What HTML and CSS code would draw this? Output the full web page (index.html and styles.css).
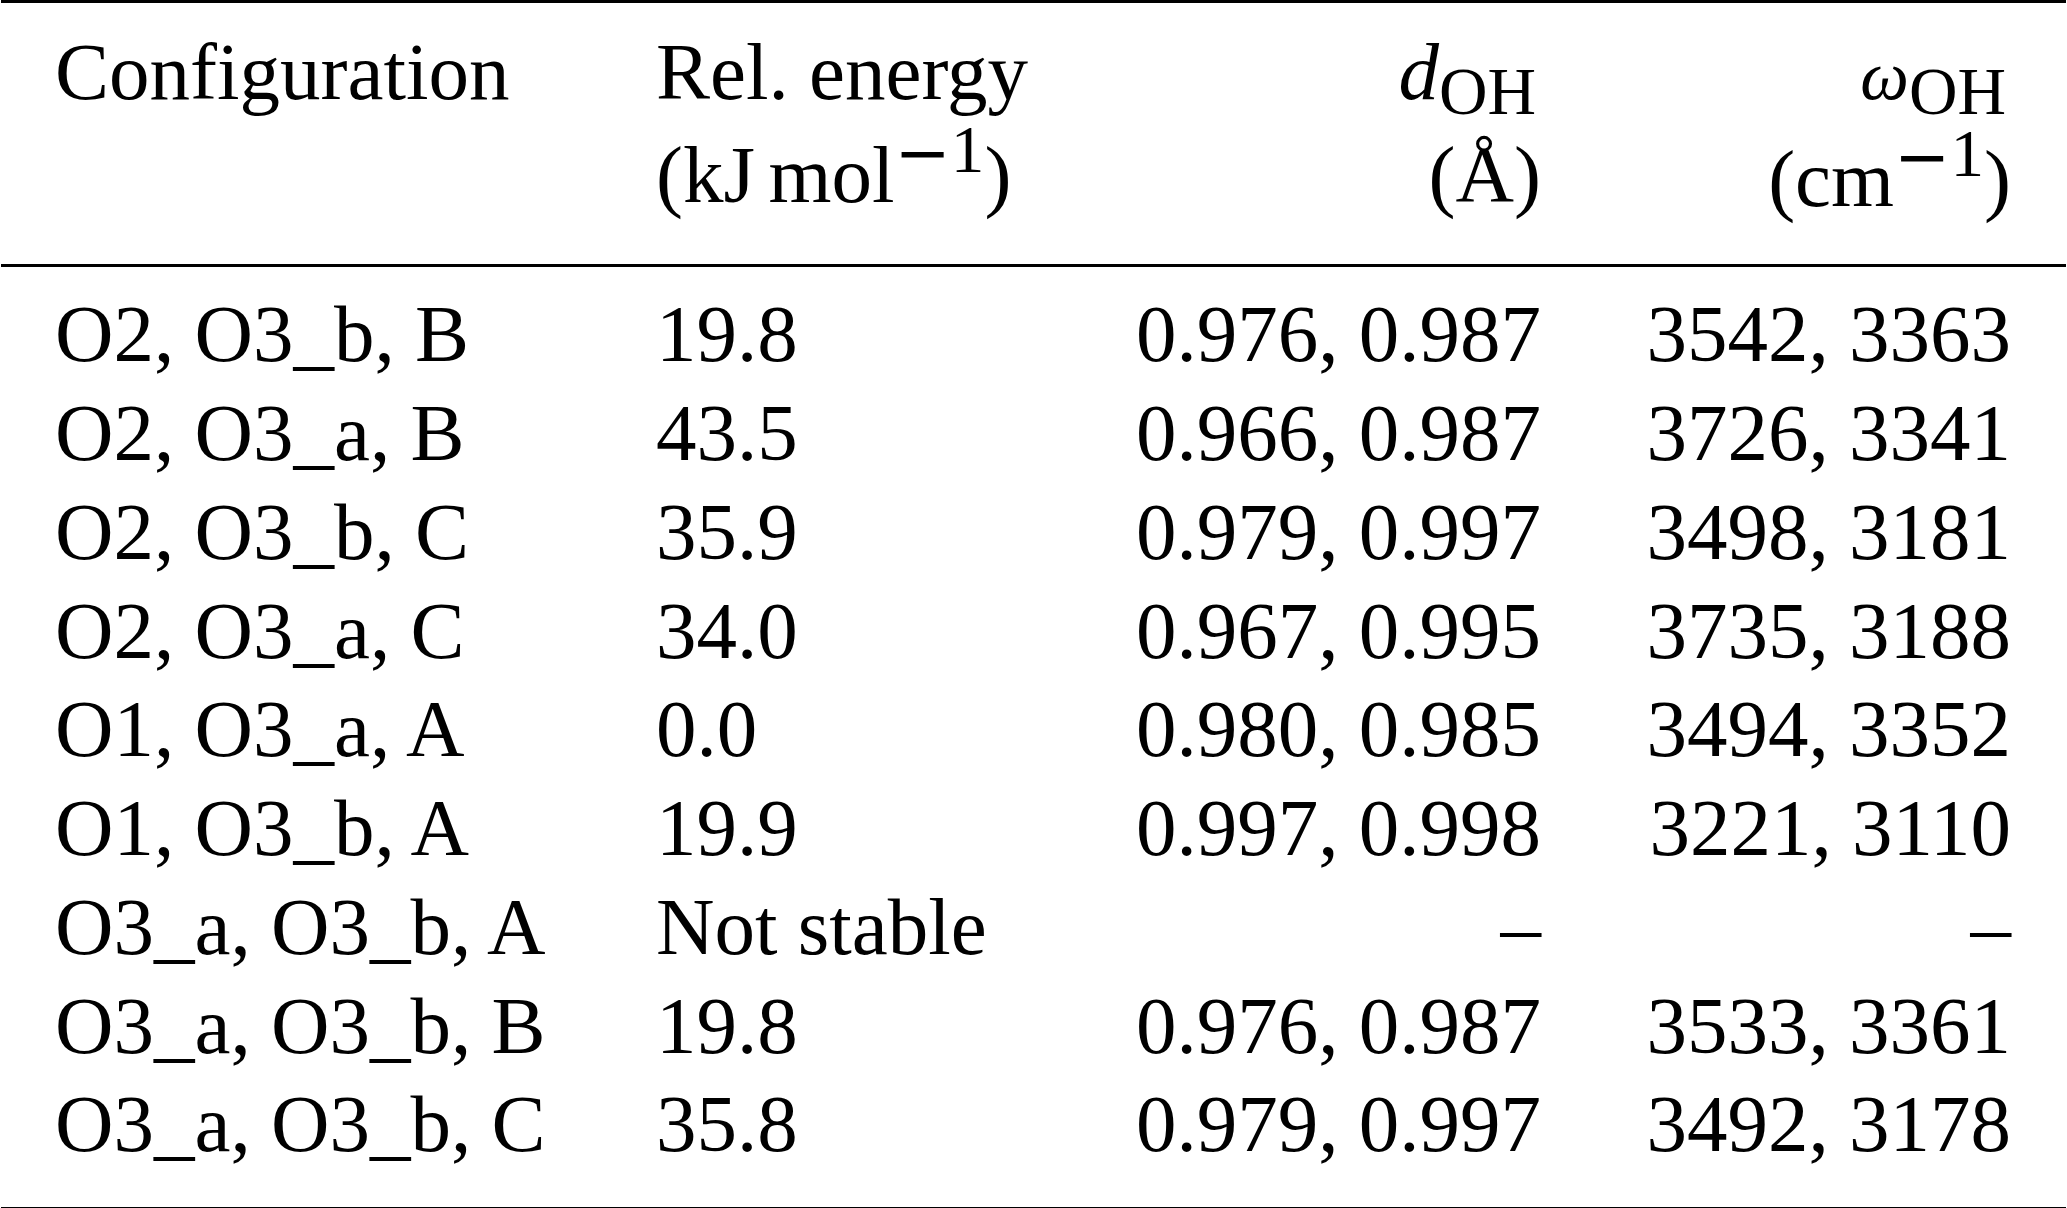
FILE: index.html
```html
<!DOCTYPE html>
<html lang="en">
<head>
<meta charset="utf-8">
<title>Configurations table</title>
<link rel="stylesheet" href="styles.css">
</head>
<body>
<div class="table">
  <div class="row head">
    <div class="cell c1">Configuration</div>
    <div class="cell c2">Rel. energy<br>(kJ<span class="thin"></span>mol<span class="sup"><span class="minus">−</span>1</span>)</div>
    <div class="cell c3"><i class="var">d</i><span class="sub">OH</span><br>(Å)</div>
    <div class="cell c4"><i class="var omega">ω</i><span class="sub">OH</span><br>(cm<span class="sup"><span class="minus">−</span>1</span>)</div>
  </div>
  <div class="body">
    <div class="row"><div class="cell c1">O2, O3_b, B</div><div class="cell c2">19.8</div><div class="cell c3">0.976, 0.987</div><div class="cell c4">3542, 3363</div></div>
    <div class="row"><div class="cell c1">O2, O3_a, B</div><div class="cell c2">43.5</div><div class="cell c3">0.966, 0.987</div><div class="cell c4">3726, 3341</div></div>
    <div class="row"><div class="cell c1">O2, O3_b, C</div><div class="cell c2">35.9</div><div class="cell c3">0.979, 0.997</div><div class="cell c4">3498, 3181</div></div>
    <div class="row"><div class="cell c1">O2, O3_a, C</div><div class="cell c2">34.0</div><div class="cell c3">0.967, 0.995</div><div class="cell c4">3735, 3188</div></div>
    <div class="row"><div class="cell c1">O1, O3_a, A</div><div class="cell c2">0.0</div><div class="cell c3">0.980, 0.985</div><div class="cell c4">3494, 3352</div></div>
    <div class="row"><div class="cell c1">O1, O3_b, A</div><div class="cell c2">19.9</div><div class="cell c3">0.997, 0.998</div><div class="cell c4">3221, 3110</div></div>
    <div class="row"><div class="cell c1">O3_a, O3_b, A</div><div class="cell c2">Not stable</div><div class="cell c3">–</div><div class="cell c4">–</div></div>
    <div class="row"><div class="cell c1">O3_a, O3_b, B</div><div class="cell c2">19.8</div><div class="cell c3">0.976, 0.987</div><div class="cell c4">3533, 3361</div></div>
    <div class="row"><div class="cell c1">O3_a, O3_b, C</div><div class="cell c2">35.8</div><div class="cell c3">0.979, 0.997</div><div class="cell c4">3492, 3178</div></div>
  </div>
</div>
</body>
</html>
```
FILE: styles.css
```css
html, body {
  margin: 0;
  padding: 0;
  background: #ffffff;
}

.table {
  width: 2065px;
  margin-left: 1px;
  border-top: 3px solid #000;
  border-bottom: 3px solid #000;
  font-family: "Liberation Serif", "Times New Roman", serif;
  font-size: 81px;
  color: #000;
}

.row {
  display: grid;
  grid-template-columns: 655px 400px 485px 525px;
}

.head {
  padding: 18.2px 0 32.8px;
  line-height: 103px;
  border-bottom: 3px solid #000;
}

.body {
  padding: 18.3px 0 32.5px;
  line-height: 98.75px;
}

.cell {
  white-space: nowrap;
}

.c1 {
  padding-left: 54px;
}

.c3 {
  text-align: right;
}

.c4 {
  text-align: right;
  padding-right: 55px;
}

.thin {
  display: inline-block;
  width: 0.167em;
}

.var {
  font-style: italic;
}

.omega {
  font-size: 0.85em;
}

.sub {
  font-size: 0.83em;
  line-height: 0;
  vertical-align: -15px;
  margin-right: 5px;
}

.sup {
  font-size: 0.83em;
  line-height: 0;
  vertical-align: 30px;
}

.minus {
  font-family: "DejaVu Serif", serif;
  position: relative;
  top: 4px;
}
```
